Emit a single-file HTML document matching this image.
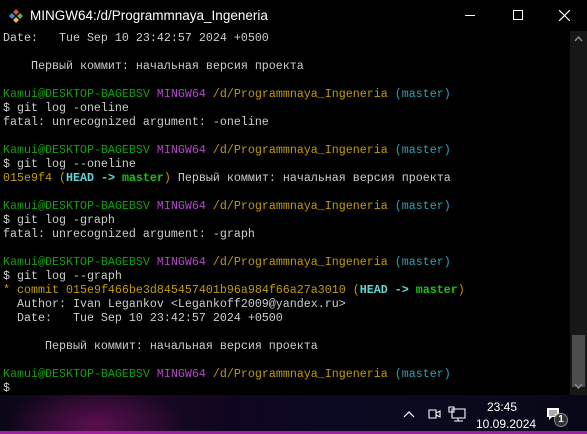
<!DOCTYPE html>
<html><head><meta charset="utf-8"><style>
*{margin:0;padding:0;box-sizing:border-box}
body{width:587px;height:434px;overflow:hidden;background:#000;position:relative;font-family:"Liberation Mono",monospace}
#title{position:absolute;left:0;top:0;width:587px;height:31px;background:#000;color:#fff;font:13.5px "Liberation Sans",sans-serif}
#title .t{position:absolute;left:30px;top:8px}
#term{position:absolute;left:3px;top:31px;font-size:11.67px;line-height:14px;color:#cccccc;white-space:pre}
.g{color:#13a10e}.m{color:#b148c6}.y{color:#c19c00}.c{color:#2aa1b3}.hc{color:#61d6d6;font-weight:bold}.hg{color:#16c60c;font-weight:bold}
#sb{position:absolute;left:570px;top:31px;width:17px;height:364px;background:#171717}
#thumb{position:absolute;left:2px;top:304px;width:13px;height:52px;background:#4d4d4d}
#tb{position:absolute;left:0;top:395px;width:587px;height:39px;background:
radial-gradient(ellipse 90px 40px at 95px 30px,#5a0e4e,transparent),linear-gradient(90deg,#0a0716 0%,#1a0a24 20%,#100520 40%,#0a0b22 60%,#070816 100%);color:#fff;font:12px "Liberation Sans",sans-serif}
#tb:after{content:"";position:absolute;left:0;bottom:0;width:100%;height:3px;background:#a020a0}
</style></head><body>
<div id="title">
<svg style="position:absolute;left:8px;top:8px" width="16" height="16" viewBox="0 0 16 16"><path d="M8 1l3 3-3 3-3-3z" fill="#e0533a"/><path d="M12 5l3 3-3 3-3-3z" fill="#5ab04a"/><path d="M8 9l3 3-3 3-3-3z" fill="#f0c030"/><path d="M4 5l3 3-3 3-3-3z" fill="#3a8ee0"/></svg>
<span class="t">MINGW64:/d/Programmnaya_Ingeneria</span>
<div style="position:absolute;left:465px;top:15px;width:10px;height:1px;background:#fff"></div>
<div style="position:absolute;left:513px;top:10px;width:10px;height:10px;border:1px solid #fff"></div>
<svg style="position:absolute;left:559px;top:10px" width="11" height="11"><path d="M0 0L11 11M11 0L0 11" stroke="#fff" stroke-width="1.2"/></svg>
</div>
<div id="term">Date:   Tue Sep 10 23:42:57 2024 +0500

    Первый коммит: начальная версия проекта

<span class="g">Kamui@DESKTOP-BAGEBSV</span> <span class="m">MINGW64</span> <span class="y">/d/Programmnaya_Ingeneria</span> <span class="c">(master)</span>
$ git log -oneline
fatal: unrecognized argument: -oneline

<span class="g">Kamui@DESKTOP-BAGEBSV</span> <span class="m">MINGW64</span> <span class="y">/d/Programmnaya_Ingeneria</span> <span class="c">(master)</span>
$ git log --oneline
<span class="y">015e9f4 (</span><span class="hc">HEAD -&gt; </span><span class="hg">master</span><span class="y">)</span> Первый коммит: начальная версия проекта

<span class="g">Kamui@DESKTOP-BAGEBSV</span> <span class="m">MINGW64</span> <span class="y">/d/Programmnaya_Ingeneria</span> <span class="c">(master)</span>
$ git log -graph
fatal: unrecognized argument: -graph

<span class="g">Kamui@DESKTOP-BAGEBSV</span> <span class="m">MINGW64</span> <span class="y">/d/Programmnaya_Ingeneria</span> <span class="c">(master)</span>
$ git log --graph
<span class="y">*</span> <span class="y">commit 015e9f466be3d845457401b96a984f66a27a3010 (</span><span class="hc">HEAD -&gt; </span><span class="hg">master</span><span class="y">)</span>
  Author: Ivan Legankov &lt;Legankoff2009@yandex.ru&gt;
  Date:   Tue Sep 10 23:42:57 2024 +0500

      Первый коммит: начальная версия проекта

<span class="g">Kamui@DESKTOP-BAGEBSV</span> <span class="m">MINGW64</span> <span class="y">/d/Programmnaya_Ingeneria</span> <span class="c">(master)</span>
$</div>
<div id="sb"><div id="thumb"></div>
<svg style="position:absolute;left:4px;top:5px" width="9" height="6"><path d="M1 5L4.5 1L8 5" stroke="#888" fill="none" stroke-width="1.5"/></svg>
<svg style="position:absolute;left:4px;top:352px" width="9" height="6"><path d="M1 1L4.5 5L8 1" stroke="#888" fill="none" stroke-width="1.5"/></svg>
</div>
<div id="tb">
<svg style="position:absolute;left:403px;top:15px" width="12" height="8"><path d="M1 7L6 2L11 7" stroke="#fff" fill="none" stroke-width="1.2"/></svg>
<svg style="position:absolute;left:427px;top:11px" width="14" height="16"><path d="M2 4h7v8H2z M9 7l4-2v6l-4-2" stroke="#fff" fill="none" stroke-width="1.1"/></svg>
<svg style="position:absolute;left:448px;top:11px" width="18" height="16"><path d="M4 3h13v9H4z M10 12v3 M6 15h9 M1 1h5v5H1z" stroke="#fff" fill="none" stroke-width="1.1"/></svg>
<div style="position:absolute;left:487px;top:5px;font-size:12px">23:45</div>
<div style="position:absolute;left:476px;top:22px;font-size:12px">10.09.2024</div>
<svg style="position:absolute;left:546px;top:12px" width="14" height="14"><path d="M1 1h12v9H6l-3 3v-3H1z" fill="#fff"/><path d="M3 4h8M3 6h8M3 8h6" stroke="#222" stroke-width="0.8"/></svg>
<div style="position:absolute;left:554px;top:18px;width:14px;height:14px;border-radius:50%;background:#333;border:1px solid #888;font-size:10px;font-weight:bold;text-align:center;line-height:12px">1</div>
</div>
</body></html>
